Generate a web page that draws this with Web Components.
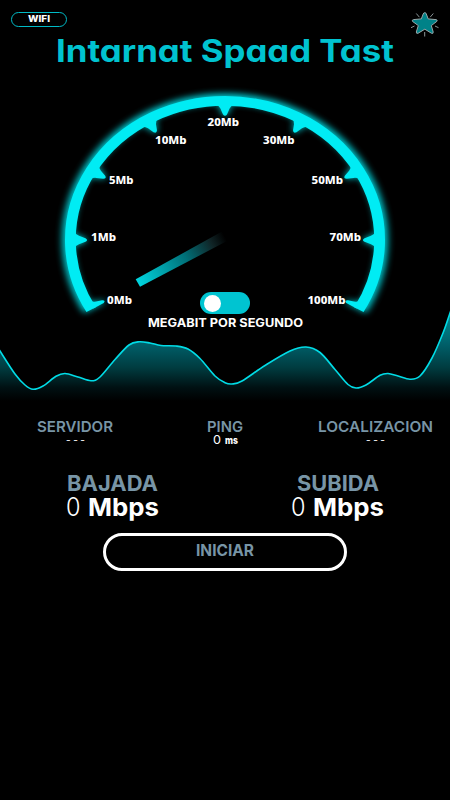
<!DOCTYPE html>
<html lang="es">
<head>
<meta charset="utf-8">
<title>Internet Speed Test</title>
<style>
body{margin:0;background:#000;color:#fff;font-family:Inter,"Liberation Sans",sans-serif}
</style>
</head>
<body>
<speed-app></speed-app>
<script>
const define=(name,html,setup)=>customElements.define(name,class extends HTMLElement{
  connectedCallback(){
    if(this.shadowRoot)return;
    const t=document.createElement('template');
    t.innerHTML=typeof html==='function'?html(this):html;
    this.attachShadow({mode:'open'}).append(t.content.cloneNode(true));
    if(setup)setup(this);
  }
});

/* A line of text set to an exact width: w, h = box, b = baseline */
define('fit-text',el=>{
  const a=n=>el.getAttribute(n);
  return `<style>:host{display:block;width:${a('w')}px;height:${a('h')}px;flex:none}
  svg{display:block;overflow:visible}
  text{font-size:${a('size')}px;font-weight:${a('weight')||600};fill:currentColor;font-feature-settings:"cv11";white-space:pre}</style>
  <svg width="${a('w')}" height="${a('h')}"><text x="0" y="${a('b')}" textLength="${a('w')}" lengthAdjust="spacingAndGlyphs">${a('label')}</text></svg>`;
});

define('wifi-pill',`<style>:host{display:flex;box-sizing:border-box;width:56px;height:15px;border:1.4px solid #00bac6;border-radius:8px;justify-content:center;color:#fff}</style>
<fit-text label="WIFI" w="22" h="12" b="9.2" size="9.6" weight="800"></fit-text>`);

define('star-badge',`<style>:host{display:block;width:30px;height:30px}svg{display:block}</style>
<svg width="30" height="30" viewBox="410 8 30 30" fill="none" stroke="#9aa6a8" stroke-linejoin="round">
<path d="M424.6 12.7Q425.6 12.2 426.3 14L428.2 18.9L436 19.6Q438 20 436.8 21.4L431.3 25.6L433.2 32Q433.3 34.2 431.4 33.2L424.8 29.2L418.2 33.2Q416.2 34 416.3 32L418.3 25.6L412.5 21.4Q411.6 20 413.5 19.6L421.3 18.9L423.2 14Q423.8 12.5 424.6 12.7Z" fill="#008288" stroke-width="1"/>
<path d="M416.3 13.5L419.4 17.2M433.3 13.5L430.2 17.2M411 27.7L414.5 26M438.5 27.7L435 26M424.7 32V36.5" stroke-width=".9"/></svg>`);

define('app-header',`<style>:host{display:flex;justify-content:space-between;align-items:flex-start;height:37px;padding:0 10px 0 11px}
wifi-pill{margin-top:12px}star-badge{margin-top:8px}</style><wifi-pill></wifi-pill><star-badge></star-badge>`);

define('app-title',`<style>:host{display:flex;justify-content:center;height:43px;color:#00c3d0}</style>
<fit-text label="Intarnat Spaad Tast" w="338" h="40" b="24.5" size="31" weight="650"></fit-text>`);

define('toggle-switch',`<style>:host{display:flex;align-items:center;box-sizing:border-box;width:50px;height:22px;border-radius:11px;background:#00c4d1;padding-left:4px}
i{width:17px;height:17px;border-radius:50%;background:#fff}</style><i></i>`);

/* Dial: the ring is drawn as a circle and flattened to 90% height */
define('speed-dial',()=>{
  const R=154.6,W=10.8,s=Math.sin(Math.PI/3),c=.5;
  const arc=`<path d="M${-R*s} ${R*c}A${R} ${R} 0 1 1 ${R*s} ${R*c}" fill="none" stroke="#00ecf4" stroke-width="${W}"/>`;
  let ticks='';
  for(let a=-90;a<=90;a+=30)ticks+=`<path transform="rotate(${a})" d="M-9 -150.5Q-5.8 -149 -4.6 -146L-2 -139.5Q0 -136.4 2 -139.5L4.6 -146Q5.8 -149 9 -150.5Z" fill="#00ecf4"/>`;
  ticks+=`<path transform="rotate(-120)" d="M0 -152V-140Q1.6 -136.5 3.4 -140L5.8 -147Q6.6 -149 9 -151Z" fill="#00ecf4"/><path transform="rotate(120)" d="M0 -152V-140Q-1.6 -136.5 -3.4 -140L-5.8 -147Q-6.6 -149 -9 -151Z" fill="#00ecf4"/>`;
  const labels=[['0Mb',107,303.5,25],['1Mb',91,240.5,25],['5Mb',109,183.5,24.5],['10Mb',155,143.5,31.5],['20Mb',207.5,126.3,31.5],['30Mb',263,143.5,31.5],['50Mb',311.5,183.5,31.5],['70Mb',329.5,240.5,31.5],['100Mb',307.5,304,38]]
   .map(([t,x,y,w])=>`<text x="${x}" y="${y}" textLength="${w}" lengthAdjust="spacingAndGlyphs">${t}</text>`).join('');
  return `<style>:host{display:block}svg{display:block}text{font:800 11px "Noto Sans",sans-serif;fill:#fff}</style>
  <svg width="450" height="240" viewBox="0 80 450 240">
  <defs><filter id="g" x="-20%" y="-20%" width="140%" height="140%"><feGaussianBlur stdDeviation="3.6"/></filter>
  <linearGradient id="n" gradientUnits="userSpaceOnUse" x1="138" y1="283" x2="225" y2="237"><stop offset="0" stop-color="#00d5df"/><stop offset=".12" stop-color="#00bfc9"/><stop offset=".55" stop-color="#007078"/><stop offset=".85" stop-color="#102426"/><stop offset="1" stop-color="#000"/></linearGradient></defs>
  <g transform="translate(225 240) scale(1 .9)"><g filter="url(#g)" opacity=".85"><g transform="scale(1.018)">${arc}</g>${ticks}</g>${arc}${ticks}</g>
  <path d="M135.7 279.3L140 286.7L228 240.5L222 231.5Z" fill="url(#n)"/>${labels}</svg>`;
});

define('speed-gauge',`<style>:host{display:grid;height:240px;grid-template:240px/450px}
speed-dial,div{grid-area:1/1}div{display:flex;justify-content:center;align-items:flex-end;padding-bottom:6px}</style>
<speed-dial></speed-dial><div><toggle-switch></toggle-switch></div>`);

define('wave-chart',()=>{
  const p=[[-8,338],[0,351],[15,374],[25,385],[33,389.3],[43,386],[56,376.3],[65,373.5],[78,377],[91,380.8],[100,377],[115,359.5],[129,345],[139,341.8],[150,343],[161,345.5],[176,346],[188,349],[200,358.5],[215,376],[225,382.7],[232,384],[242,381],[265,365.5],[290,351],[306,347],[320,352.5],[335,369.5],[348,384.5],[356,388],[366,385],[380,375.3],[388,373.5],[398,376],[410,379.2],[420,376],[432,358],[443,333],[450,313],[454,301]];
  let d=`M${p[0]}`;
  for(let i=0;i<p.length-1;i++){
    const a=p[i-1]||p[i],b=p[i],e=p[i+1],f=p[i+2]||e;
    d+=`C${b[0]+(e[0]-a[0])/6} ${b[1]+(e[1]-a[1])/6} ${e[0]-(f[0]-b[0])/6} ${e[1]-(f[1]-b[1])/6} ${e[0]} ${e[1]}`;
  }
  return `<style>:host{display:block;height:95px}svg{display:block}</style>
  <svg width="450" height="95" viewBox="0 310 450 95"><defs><linearGradient id="f" gradientUnits="userSpaceOnUse" x1="0" y1="313" x2="0" y2="401"><stop offset="0" stop-color="#008f96"/><stop offset=".35" stop-color="#00606a"/><stop offset=".62" stop-color="#003c40"/><stop offset=".85" stop-color="#001012"/><stop offset="1" stop-color="#000"/></linearGradient></defs>
  <path d="${d}V405H-8Z" fill="url(#f)"/><path d="${d}" fill="none" stroke="#00dce6" stroke-width="1.6"/></svg>`;
});

define('wave-section',`<style>:host{display:grid;height:85px;grid-template:85px/450px}
wave-chart,div{grid-area:1/1}wave-chart{margin-top:-10px}div{display:flex;justify-content:center}</style>
<wave-chart></wave-chart><div><fit-text label="MEGABIT POR SEGUNDO" w="155" h="14" b="7.2" size="12" weight="650"></fit-text></div>`);

define('info-stat',el=>`<style>:host{display:flex;flex-direction:column;align-items:center}.t{color:#7895a6}</style>
<fit-text class="t" label="${el.getAttribute('label')}" w="${el.getAttribute('w')}" h="15" b="12" size="15" weight="600"></fit-text><slot></slot>`);

define('no-value',`<style>:host{display:block}</style><fit-text label="- - -" w="19" h="12" b="8" size="8" weight="600"></fit-text>`);

define('info-row',`<style>:host{display:grid;grid-template-columns:repeat(3,150px);height:56px;padding-top:15px}.p{display:flex;gap:4px}</style>
<info-stat label="SERVIDOR" w="76"><no-value></no-value></info-stat>
<info-stat label="PING" w="36"><div class="p"><fit-text label="0" w="8" h="12" b="9.2" size="12.3" weight="400"></fit-text><fit-text label="ms" w="13" h="12" b="9" size="10" weight="800"></fit-text></div></info-stat>
<info-stat label="LOCALIZACION" w="115"><no-value></no-value></info-stat>`);

define('rate-stat',el=>`<style>:host{display:flex;flex-direction:column;align-items:center}.t{color:#7895a6}.v{display:flex;gap:8px}</style>
<fit-text class="t" label="${el.getAttribute('label')}" w="${el.getAttribute('w')}" h="23" b="16.5" size="22" weight="650"></fit-text>
<div class="v"><fit-text label="0" w="14.5" h="28" b="19" size="25" weight="300"></fit-text><fit-text label="Mbps" w="71" h="28" b="19" size="24.5" weight="700"></fit-text></div>`);

define('rate-row',`<style>:host{display:grid;grid-template-columns:225px 225px;height:57px}</style>
<rate-stat label="BAJADA" w="91"></rate-stat><rate-stat label="SUBIDA" w="82"></rate-stat>`);

define('start-button',`<style>:host{display:block}button{all:unset;display:flex;justify-content:center;box-sizing:border-box;width:244px;height:38px;border:3px solid #fff;border-radius:20px;color:#7895a6}</style>
<button><fit-text label="INICIAR" w="58" h="28" b="20" size="16" weight="650"></fit-text></button>`);

define('speed-app',`<style>:host{display:flex;flex-direction:column;width:450px;height:800px;overflow:hidden;background:#000}
start-button{align-self:center;margin-top:2px}rate-row{margin-top:-2px}</style>
<app-header></app-header><app-title></app-title><speed-gauge></speed-gauge><wave-section></wave-section>
<info-row></info-row><rate-row></rate-row><start-button></start-button>`);
</script>
</body>
</html>
